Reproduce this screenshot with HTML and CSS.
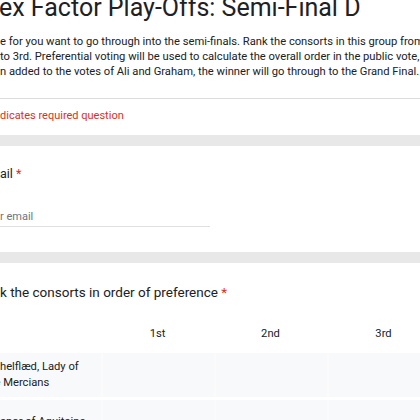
FILE: index.html
```html
<!DOCTYPE html>
<html>
<head>
<meta charset="utf-8">
<link rel="stylesheet" href="styles.css">
</head>
<body>
<div class="page">
  <section class="card head-card">
    <div class="head-main">
      <h1 class="title">ex Factor Play-Offs: Semi-Final D</h1>
      <div class="desc">
        <div>e for you want to go through into the semi-finals. Rank the consorts in this group from</div>
        <div>to 3rd. Preferential voting will be used to calculate the overall order in the public vote,</div>
        <div>n added to the votes of Ali and Graham, the winner will go through to the Grand Final.</div>
      </div>
    </div>
    <div class="required-note">dicates required question</div>
  </section>

  <section class="card q-card">
    <div class="q-title q-title-email">ail <span class="req">*</span></div>
    <div class="input">r email</div>
  </section>

  <section class="card q-card grid-card">
    <div class="q-title q-title-grid">k the consorts in order of preference <span class="req">*</span></div>
    <div class="grid">
      <div class="grid-row grid-head">
        <div class="label"></div>
        <div class="col">1st</div>
        <div class="col">2nd</div>
        <div class="col">3rd</div>
      </div>
      <div class="grid-row grid-body">
        <div class="label"><span class="line">helflæd, Lady of</span><span class="line cut">e Mercians</span></div>
        <div class="cell"></div>
        <div class="cell"></div>
        <div class="cell"></div>
      </div>
      <div class="grid-row grid-body">
        <div class="label"><span class="line">anor of Aquitaine</span></div>
        <div class="cell"></div>
        <div class="cell"></div>
        <div class="cell"></div>
      </div>
    </div>
  </section>
</div>
</body>
</html>
```

FILE: styles.css
```css
html, body {
  margin: 0;
  padding: 0;
}
body {
  width: 420px;
  height: 420px;
  overflow: hidden;
  background: #e8e8e8;
  font-family: Roboto, "Liberation Sans", sans-serif;
  color: #202124;
}
.page {
  display: flex;
  flex-direction: column;
  gap: 11px;
  width: 460px;
}
.card {
  background: #fff;
}
.head-main {
  padding-bottom: 19px;
  border-bottom: 1px solid #dadce0;
}
.title {
  margin: -7.5px 0 0 -1px;
  font-size: 25px;
  line-height: 30px;
  font-weight: 400;
  white-space: nowrap;
}
.desc {
  margin-top: 11px;
  font-size: 11.2px;
  line-height: 15px;
  white-space: nowrap;
}
.required-note {
  padding: 9px 0 12px;
  font-size: 11px;
  line-height: 15px;
  color: #d93025;
}
.q-card {
  padding: 18px 0 25px;
}
.q-title {
  font-size: 13px;
  line-height: 20px;
}
.q-title-email {
  font-size: 12.5px;
}
.req {
  color: #d93025;
}
.input {
  margin-top: 25px;
  width: 210px;
  font-size: 11px;
  line-height: 15px;
  color: #70757a;
  padding-bottom: 2px;
  border-bottom: 1px solid #e0e0e0;
}
.grid-card {
  padding-top: 19px;
  padding-bottom: 0;
}
.q-title-grid {
  font-size: 13.5px;
}
.grid {
  margin-top: 24px;
  display: flex;
  flex-direction: column;
  gap: 3px;
}
.grid-row {
  display: grid;
  grid-template-columns: 101px 113px 113px 113px;
}
.grid-head {
  font-size: 11.2px;
  line-height: 15px;
  margin-bottom: 9px;
}
.col {
  text-align: center;
}
.grid-body {
  background: #f8f9fa;
  min-height: 44px;
}
.label {
  align-self: center;
  font-size: 11.2px;
  line-height: 15.3px;
  white-space: nowrap;
}
.grid-head .label {
  align-self: stretch;
}
.line {
  display: block;
}
.cut {
  margin-left: -5.5px;
}
.cell {
  border-left: 2px solid #fbfbfc;
}
```
